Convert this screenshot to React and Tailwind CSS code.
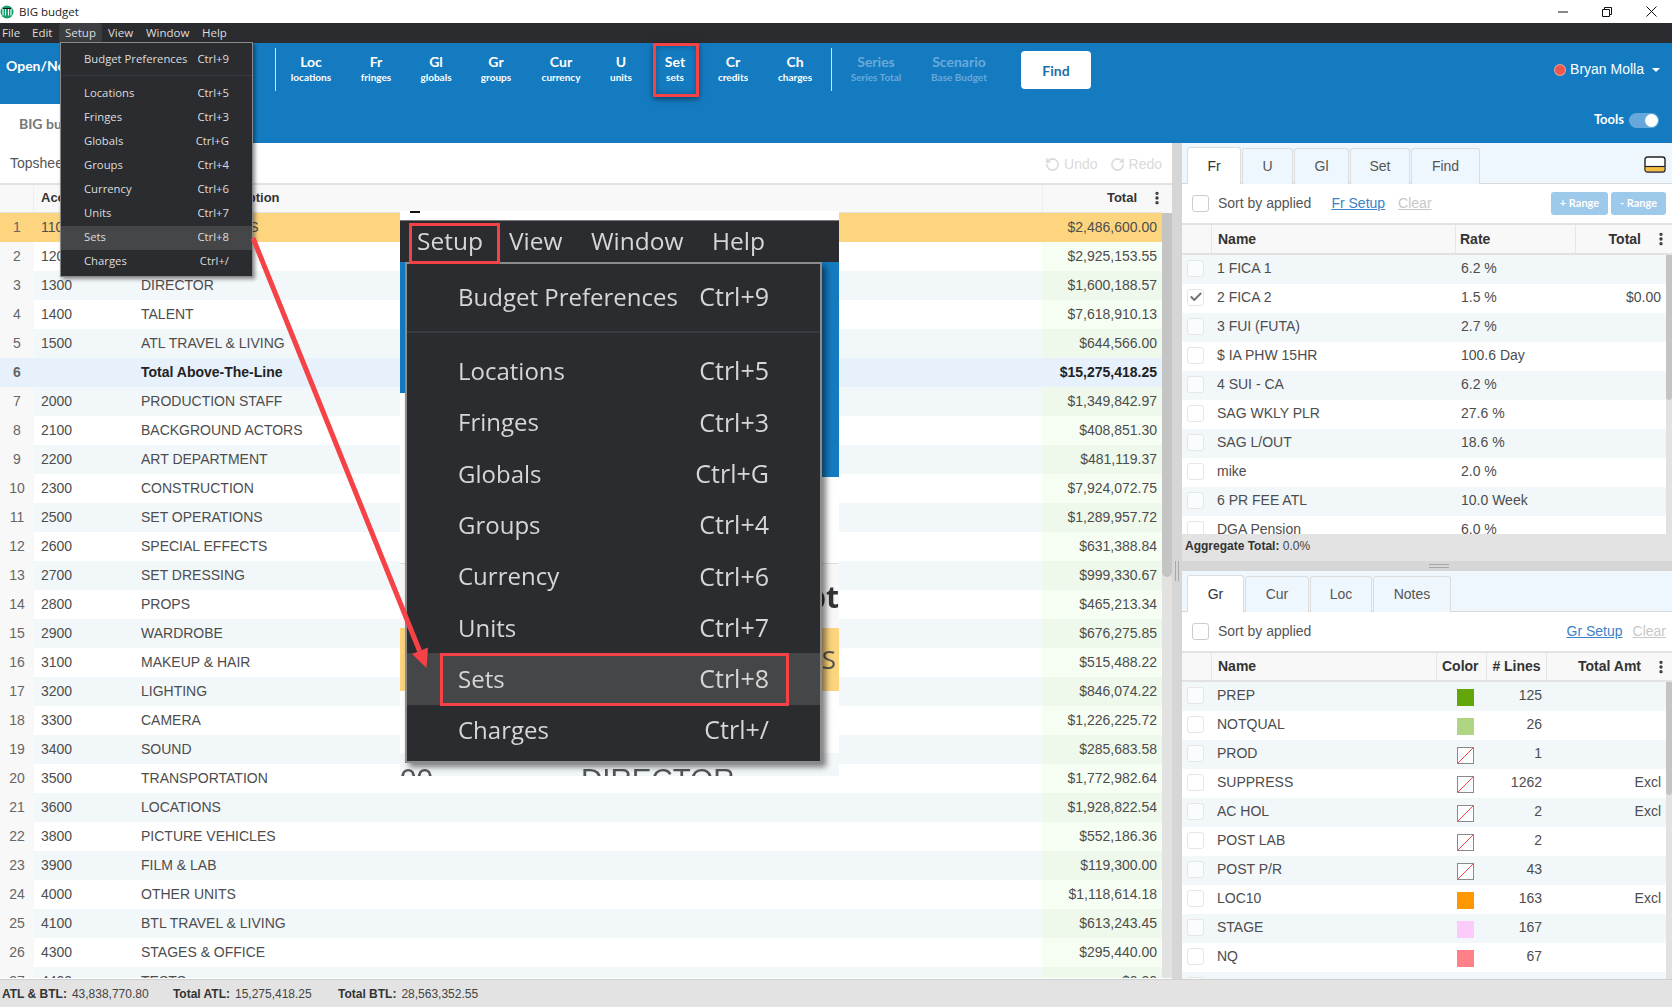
import { Check, EllipsisVertical, RotateCcw, RotateCw } from "lucide-react"

const topRows = [
  ["1", "1100", "STORY & RIGHTS", "$2,486,600.00"],
  ["2", "1200", "PRODUCERS", "$2,925,153.55"],
  ["3", "1300", "DIRECTOR", "$1,600,188.57"],
  ["4", "1400", "TALENT", "$7,618,910.13"],
  ["5", "1500", "ATL TRAVEL & LIVING", "$644,566.00"],
  ["6", "", "Total Above-The-Line", "$15,275,418.25"],
  ["7", "2000", "PRODUCTION STAFF", "$1,349,842.97"],
  ["8", "2100", "BACKGROUND ACTORS", "$408,851.30"],
  ["9", "2200", "ART DEPARTMENT", "$481,119.37"],
  ["10", "2300", "CONSTRUCTION", "$7,924,072.75"],
  ["11", "2500", "SET OPERATIONS", "$1,289,957.72"],
  ["12", "2600", "SPECIAL EFFECTS", "$631,388.84"],
  ["13", "2700", "SET DRESSING", "$999,330.67"],
  ["14", "2800", "PROPS", "$465,213.34"],
  ["15", "2900", "WARDROBE", "$676,275.85"],
  ["16", "3100", "MAKEUP & HAIR", "$515,488.22"],
  ["17", "3200", "LIGHTING", "$846,074.22"],
  ["18", "3300", "CAMERA", "$1,226,225.72"],
  ["19", "3400", "SOUND", "$285,683.58"],
  ["20", "3500", "TRANSPORTATION", "$1,772,982.64"],
  ["21", "3600", "LOCATIONS", "$1,928,822.54"],
  ["22", "3800", "PICTURE VEHICLES", "$552,186.36"],
  ["23", "3900", "FILM & LAB", "$119,300.00"],
  ["24", "4000", "OTHER UNITS", "$1,118,614.18"],
  ["25", "4100", "BTL TRAVEL & LIVING", "$613,243.45"],
  ["26", "4300", "STAGES & OFFICE", "$295,440.00"],
  ["27", "4400", "TESTS", "$0.00"],
]

const fringes = [
  ["1 FICA 1", "6.2 %", ""],
  ["2 FICA 2", "1.5 %", "$0.00"],
  ["3 FUI (FUTA)", "2.7 %", ""],
  ["$ IA PHW 15HR", "100.6 Day", ""],
  ["4 SUI - CA", "6.2 %", ""],
  ["SAG WKLY PLR", "27.6 %", ""],
  ["SAG L/OUT", "18.6 %", ""],
  ["mike", "2.0 %", ""],
  ["6 PR FEE ATL", "10.0 Week", ""],
  ["DGA Pension", "6.0 %", ""],
]

const groups = [
  ["PREP", "bg-[#63a60a]", "125", ""],
  ["NOTQUAL", "bg-[#aed581]", "26", ""],
  ["PROD", "", "1", ""],
  ["SUPPRESS", "", "1262", "Excl"],
  ["AC HOL", "", "2", "Excl"],
  ["POST LAB", "", "2", ""],
  ["POST P/R", "", "43", ""],
  ["LOC10", "bg-[#ff9800]", "163", "Excl"],
  ["STAGE", "bg-[#fccbfc]", "167", ""],
  ["NQ", "bg-[#ff8087]", "67", ""],
  ["", "", "", ""],
]

const tools = [
  ["Loc", "locations", "w-[70px]"],
  ["Fr", "fringes", "w-[60px]"],
  ["Gl", "globals", "w-[60px]"],
  ["Gr", "groups", "w-[60px]"],
  ["Cur", "currency", "w-[70px]"],
  ["U", "units", "w-[50px]"],
  ["Set", "sets", "w-[58px]"],
  ["Cr", "credits", "w-[58px]"],
  ["Ch", "charges", "w-[66px]"],
]

const menuBar = [
  ["File", "w-[27px] pl-[2px]"],
  ["Edit", "w-[32px] pl-[5px]"],
  ["Setup", "w-[43px] pl-[6px] bg-[#3d3e42] rounded-t-sm"],
  ["View", "w-[39px] pl-[6px]"],
  ["Window", "w-[56px] pl-[5px]"],
  ["Help", "w-[40px] pl-[5px]"],
]

const setupItems = [
  ["Locations", "Ctrl+5"],
  ["Fringes", "Ctrl+3"],
  ["Globals", "Ctrl+G"],
  ["Groups", "Ctrl+4"],
  ["Currency", "Ctrl+6"],
  ["Units", "Ctrl+7"],
  ["Sets", "Ctrl+8"],
  ["Charges", "Ctrl+/"],
]

function Logo() {
  return (
    <svg width="14" height="14" viewBox="0 0 14 14">
      <circle cx="7" cy="7" r="6.5" fill="#14a06a" />
      <path d="M3 3.5v7M5.5 3.5v7M8.5 3.5v7M11 3.5v7" stroke="#fff" strokeWidth="1.1" />
      <path d="M3 3.5h8" stroke="#111" strokeWidth="1" />
    </svg>
  )
}

function Kebab() {
  return <EllipsisVertical size={16} strokeWidth={3} className="text-[#333]" />
}

function Checkbox({ checked = false, big = false }) {
  return (
    <span
      className={`flex items-center justify-center rounded-[3px] border bg-white/60 w-[17px] h-[17px] ${
        big ? "border-[#cccccc]" : "border-[#e6e6e6]"
      }`}
    >
      {checked && <Check size={14} strokeWidth={3.5} className="text-[#777]" />}
    </span>
  )
}

function Tabs({ items }) {
  return (
    <div className="flex h-[41px] items-end bg-[#eef7fd] border-b border-[#d8d8d8] pl-[5px] gap-[1px] relative">
      {items.map(([label, width], i) => (
        <div
          key={label}
          className={`${width} h-[36px] -mb-px flex items-center justify-center rounded-t-[3px] border border-b-0 border-[#dcdcdc] text-[14px] ${
            i === 0 ? "bg-white text-[#333] h-[37px]" : "bg-[#eef7fd] text-[#555]"
          }`}
        >
          {label}
        </div>
      ))}
    </div>
  )
}

function Scrollbar({ thumb }) {
  return (
    <div className="w-[6px] bg-[#e2e2e2] shrink-0">
      <div className={`${thumb} bg-[#c4c4c4] rounded-b-[3px]`} />
    </div>
  )
}

function BudgetTable() {
  return (
    <div className="flex-1 flex flex-col min-w-0">
      <div className="h-[40px] flex items-center justify-between pl-[10px] pr-[10px] bg-white text-[14px]">
        <span className="text-[#555] pt-[1px]">Topsheet</span>
        <span className="flex items-center text-[#dadada] text-[14px] gap-[12px] pt-[3px]">
          <span className="flex items-center gap-[4px]"><RotateCcw size={15} strokeWidth={2.5} />Undo</span>
          <span className="flex items-center gap-[4px]"><RotateCw size={15} strokeWidth={2.5} />Redo</span>
        </span>
      </div>
      <div className="h-[30px] flex bg-[#f8f8f8] border-t-2 border-[#e2e2e2] text-[13px] font-bold text-[#333]">
        <div className="w-[34px] border-r border-[#eeeeee]" />
        <div className="w-[107px] pl-[7px] pb-[2px] flex items-center">Account</div>
        <div className="flex-1 pl-[67px] pb-[2px] flex items-center">Description</div>
        <div className="w-[130px] pb-[2px] flex items-center justify-end border-l border-[#eeeeee] pr-[7px] gap-[12px]">
          Total <Kebab />
        </div>
      </div>
      <div className="flex">
        <div className="flex-1 min-w-0 h-[766px] overflow-hidden border-t border-[#e2e2e2] -mt-px">
          {topRows.map(([num, acct, desc, total], i) => {
            const isTotal = num === "6"
            const isFirst = num === "1"
            const stripe = i % 2 === 0
            const rowBg = isFirst ? "bg-[#fdd57e]" : isTotal ? "bg-[#e6f1fc]" : stripe ? "bg-[#f2f7fa]" : "bg-white"
            const totalBg = isFirst || isTotal ? "" : stripe ? "bg-[#eef9ec]" : "bg-[#f6fef4]"
            return (
              <div
                key={num}
                className={`h-[29px] flex items-center text-[14px] ${rowBg} ${isTotal ? "font-bold text-[#222]" : "text-[#4d4d4d]"}`}
              >
                <div className={`w-[34px] h-full pb-[1px] flex items-center justify-center ${isFirst || isTotal ? "" : "bg-[#f8f8f8]"} text-[#666]`}>
                  {num}
                </div>
                <div className="w-[107px] pl-[7px] pb-[1px]">{acct}</div>
                <div className="flex-1 pb-[1px]">{desc}</div>
                <div className={`w-[120px] h-full pb-[1px] flex items-center justify-end pr-[5px] ${totalBg}`}>{total}</div>
              </div>
            )
          })}
        </div>
        <div className="w-[10px] bg-[#e2e2e2] shrink-0">
          <div className="h-[364px] bg-[#c4c4c4] rounded-b-[5px]" />
        </div>
      </div>
    </div>
  )
}

function VerticalSplitter() {
  return (
    <div className="w-[10px] bg-[#d6d6d6] shrink-0 flex flex-col items-center pt-[418px]">
      <div className="h-[20px] w-[4px] border-x border-[#a8a8a8]" />
    </div>
  )
}

function FringesPanel() {
  return (
    <div className="h-[418px] flex flex-col">
      <div className="relative">
        <Tabs items={[["Fr", "w-[54px]"], ["U", "w-[51px]"], ["Gl", "w-[55px]"], ["Set", "w-[60px]"], ["Find", "w-[69px]"]]} />
        <svg width="22" height="17" viewBox="0 0 22 17" className="absolute right-[6px] top-[13px]">
          <rect x="1" y="1" width="20" height="15" rx="2.5" fill="#fff" stroke="#222" strokeWidth="1.4" />
          <rect x="1.8" y="11" width="18.4" height="4.2" fill="#f7bd42" />
          <path d="M1 10.5h20" stroke="#222" strokeWidth="1.2" />
        </svg>
      </div>
      <div className="h-[41px] flex items-center pl-[10px] pr-[6px] text-[14px] text-[#555] border-b-2 border-[#e2e2e2]">
        <Checkbox big />
        <span className="ml-[9px]">Sort by applied</span>
        <span className="ml-[20px] text-[#3b82c8] underline">Fr Setup</span>
        <span className="ml-[13px] text-[#c8c8c8] underline">Clear</span>
        <span className="ml-auto flex gap-[3px] font-['Lato',sans-serif] font-bold text-[11px] text-white">
          <span className="w-[57px] h-[23px] flex items-center justify-center rounded-[3px] bg-[#9dc9ea]">+ Range</span>
          <span className="w-[55px] h-[23px] flex items-center justify-center rounded-[3px] bg-[#9dc9ea]">- Range</span>
        </span>
      </div>
      <div className="h-[30px] flex items-center bg-[#f8f8f8] border-b-2 border-[#e2e2e2] text-[14px] font-bold text-[#333] shrink-0">
        <div className="w-[30px] h-full border-r border-[#e6e6e6]" />
        <div className="w-[244px] h-full flex items-center pl-[6px] border-r border-[#e6e6e6]">Name</div>
        <div className="w-[120px] h-full flex items-center pl-[4px] border-r border-[#e6e6e6]">Rate</div>
        <div className="flex-1 h-full flex items-center justify-end gap-[12px] pr-[3px]">Total <Kebab /></div>
      </div>
      <div className="h-[279px] flex shrink-0">
        <div className="flex-1 overflow-hidden">
          {fringes.map(([name, rate, total], i) => (
            <div key={name} className={`h-[29px] pb-[3px] flex items-center text-[14px] text-[#4d4d4d] shrink-0 ${i % 2 === 0 ? "bg-[#f2f7fa]" : "bg-white"}`}>
              <div className="w-[30px] pl-[5px]"><Checkbox checked={i === 1} /></div>
              <div className="w-[244px] pl-[5px]">{name}</div>
              <div className="w-[120px] pl-[5px]">{rate}</div>
              <div className="flex-1 text-right pr-[5px]">{total}</div>
            </div>
          ))}
        </div>
        <Scrollbar thumb="h-[145px]" />
      </div>
      <div className="h-[27px] pb-[3px] flex items-center pl-[3px] bg-[#e3e3e3] text-[12px] text-[#444]">
        <span className="font-bold text-[#333]">Aggregate Total:</span>&nbsp;0.0%
      </div>
    </div>
  )
}

function Swatch({ color }) {
  if (color) return <div className={`w-[17px] h-[17px] mt-[3px] ${color}`} />
  return (
    <svg width="17" height="17" viewBox="0 0 17 17" className="mt-[3px]">
      <rect x="0.5" y="0.5" width="16" height="16" fill="#fff" stroke="#8a8a8a" />
      <path d="M1 16L16 1" stroke="#f44a4a" strokeWidth="1" />
    </svg>
  )
}

function GroupsPanel() {
  return (
    <div className="flex-1 flex flex-col min-h-0">
      <Tabs items={[["Gr", "w-[57px]"], ["Cur", "w-[64px]"], ["Loc", "w-[62px]"], ["Notes", "w-[78px]"]]} />
      <div className="h-[41px] flex items-center pl-[10px] pr-[6px] text-[14px] text-[#555] border-b-2 border-[#e2e2e2] shrink-0">
        <Checkbox big />
        <span className="ml-[9px]">Sort by applied</span>
        <span className="ml-auto text-[#3b82c8] underline">Gr Setup</span>
        <span className="ml-[10px] text-[#c8c8c8] underline">Clear</span>
      </div>
      <div className="h-[29px] flex items-center bg-[#f8f8f8] border-b-2 border-[#e2e2e2] text-[14px] font-bold text-[#333] shrink-0">
        <div className="w-[30px] h-full border-r border-[#e6e6e6]" />
        <div className="w-[225px] h-full flex items-center pl-[6px] border-r border-[#e6e6e6]">Name</div>
        <div className="w-[50px] h-full flex items-center pl-[5px] border-r border-[#e6e6e6]">Color</div>
        <div className="w-[60px] h-full flex items-center justify-center border-r border-[#e6e6e6]"># Lines</div>
        <div className="flex-1 h-full flex items-center justify-end gap-[12px] pr-[3px]">Total Amt <Kebab /></div>
      </div>
      <div className="h-[297px] flex">
        <div className="flex-1 overflow-hidden">
          {groups.map(([name, color, lines, amt], i) => (
            <div key={i} className={`h-[29px] pb-[2px] flex items-center text-[14px] text-[#4d4d4d] ${i % 2 === 0 ? "bg-[#f2f7fa]" : "bg-white"}`}>
              <div className="w-[30px] pl-[5px]"><Checkbox /></div>
              <div className="w-[225px] pl-[5px]">{name}</div>
              <div className="w-[50px] pl-[20px] flex">{name && <Swatch color={color} />}</div>
              <div className="w-[55px] text-right">{lines}</div>
              <div className="flex-1 text-right pr-[5px]">{amt}</div>
            </div>
          ))}
        </div>
        <Scrollbar thumb="h-[113px]" />
      </div>
    </div>
  )
}

function SetupDropdown() {
  return (
    <div className="absolute left-[60px] top-[42px] w-[193px] h-[235px] bg-[#2b2c30] border border-[#8a8a8a] shadow-[2px_2px_4px_rgba(0,0,0,0.45)] pt-[4px] text-[11.3px] text-[#dddddd] font-['Open_Sans',sans-serif]">
      <div className="h-[24px] flex items-center justify-between px-[23px]">
        <span>Budget Preferences</span>
        <span>Ctrl+9</span>
      </div>
      <div className="mt-[4px] mb-[5.5px] h-px bg-[#3a3b40]" />
      {setupItems.map(([label, keys]) => (
        <div key={label} className={`h-[24px] flex items-center justify-between px-[23px] ${label === "Sets" ? "bg-[#454648]" : ""}`}>
          <span>{label}</span>
          <span>{keys}</span>
        </div>
      ))}
    </div>
  )
}

function ZoomInset() {
  return (
    <div className="absolute left-[400px] top-[211px] w-[439px] h-[565px] bg-white overflow-hidden font-['Open_Sans',sans-serif]">
      <div className="h-[9px] bg-white">
        <div className="ml-[10px] w-[10px] h-[2px] bg-[#111]" />
      </div>
      <div className="h-[42px] bg-[#2b2c30] border-t border-[#777] flex items-center text-[24.5px] text-[#d6d6d6] blur-[0.4px]">
        <span className="ml-[17px] w-[92px]">Setup</span>
        <span className="w-[82px]">View</span>
        <span className="w-[121px]">Window</span>
        <span>Help</span>
      </div>
      <div className="h-[215px] bg-[#147bc1] relative">
        <div className="absolute left-0 top-[131px] w-[6px] h-[84px] bg-white" />
      </div>
      <div className="h-[86px] bg-white" />
      <div className="h-[65px] bg-[#f8f8f8] border-t border-[#dddddd] flex items-center justify-end text-[30px] font-bold text-[#333] blur-[0.5px] overflow-hidden">
        <span>pt</span>
      </div>
      <div className="h-[63px] bg-[#fdd57e] flex items-center justify-end pr-[3px] text-[26px] text-[#555] blur-[0.5px]">
        <span>S</span>
      </div>
      <div className="h-[62px] bg-white" />
      <div className="h-[23px] bg-[#f2f7fa] relative overflow-hidden font-['Liberation_Sans',sans-serif] text-[29.5px] text-[#555] blur-[0.4px]">
        <span className="absolute left-0 top-[4px]">00</span>
        <span className="absolute left-[181px] top-[4px]">DIRECTOR</span>
      </div>

      <div className="absolute left-[5px] top-[51px] w-[417px] h-[501px] bg-[#2b2c30] border-2 border-[#8c8c8c] shadow-[4px_4px_6px_rgba(0,0,0,0.5)] pt-[7px] text-[#d6d6d6]">
        <div className="h-[51px] flex items-center justify-between pl-[51px] pr-[51px] blur-[0.4px]">
          <span className="text-[24px]">Budget Preferences</span>
          <span className="text-[25px]">Ctrl+9</span>
        </div>
        <div className="mt-[9px] mb-[12.5px] h-[2px] bg-[#3a3b40]" />
        {setupItems.map(([label, keys]) => (
          <div key={label} className={`h-[51.3px] flex items-center justify-between pl-[51px] pr-[51px] ${label === "Sets" ? "bg-[#454648]" : ""}`}>
            <span className="text-[24px] blur-[0.4px]">{label}</span>
            <span className="text-[25px] blur-[0.4px]">{keys}</span>
          </div>
        ))}
      </div>

      <div className="absolute left-[9px] top-[12px] w-[91px] h-[41px] border-[3px] border-[#f44247]" />
      <div className="absolute left-[40px] top-[442px] w-[349px] h-[53px] border-[3px] border-[#f44247]" />
    </div>
  )
}

function Arrow() {
  return (
    <svg width="1672" height="1007" viewBox="0 0 1672 1007" className="absolute left-0 top-0 pointer-events-none">
      <path d="M253 238L419.6 651" stroke="#f44247" strokeWidth="5" />
      <path d="M426.5 668L412 654L428 647.5Z" fill="#f44247" />
    </svg>
  )
}

export default function App() {
  return (
    <div className="relative w-[1672px] h-[1007px] overflow-hidden flex flex-col bg-white font-['Liberation_Sans',sans-serif]">
      {/* window title */}
      <div className="h-[23px] flex items-center bg-white shrink-0 font-['Open_Sans',sans-serif] text-[11.5px] text-[#222]">
        <Logo />
        <span className="ml-[5px]">BIG budget</span>
        <div className="ml-auto flex items-center pr-[15px] gap-[34px]">
          <svg width="10" height="10" viewBox="0 0 10 10"><path d="M0 5h10" stroke="#111" /></svg>
          <svg width="10" height="10" viewBox="0 0 10 10" fill="none" stroke="#111"><path d="M.5 2.5h7v7h-7zM2.5 2.5v-2h7v7h-2" /></svg>
          <svg width="11" height="11" viewBox="0 0 11 11" fill="none" stroke="#111"><path d="M.5.5l10 10M10.5.5l-10 10" /></svg>
        </div>
      </div>

      {/* menu bar */}
      <div className="h-[20px] flex items-stretch bg-[#2b2c30] shrink-0 font-['Open_Sans',sans-serif] text-[11.5px] text-[#dddddd]">
        {menuBar.map(([label, cls]) => (
          <div key={label} className={`flex items-center ${cls}`}>{label}</div>
        ))}
      </div>

      {/* blue header */}
      <div className="h-[100px] bg-[#147bc1] shrink-0 flex flex-col font-['Lato',sans-serif] text-white">
        <div className="h-[61px] flex items-start relative">
          <div className="w-[275px] shrink-0 pl-[6px] pt-[12px] text-[14px] font-bold">Open/New</div>
          <div className="mt-[5px] h-[43px] w-px bg-[#d0e4f2]" />
          {tools.map(([title, sub, width]) => (
            <div key={title} className={`${width} pt-[12px] flex flex-col items-center leading-none shrink-0`}>
              <span className="text-[14px] font-bold h-[17px]">{title}</span>
              <span className="text-[10px] font-bold">{sub}</span>
            </div>
          ))}
          <div className="ml-[3px] mt-[5px] h-[43px] w-px bg-[#d0e4f2]" />
          <div className="w-[86px] pt-[12px] flex flex-col items-center leading-none text-[#69a9da] ml-[1px]">
            <span className="text-[14px] font-bold h-[17px]">Series</span>
            <span className="text-[10px] font-bold">Series Total</span>
          </div>
          <div className="w-[80px] pt-[12px] flex flex-col items-center leading-none text-[#69a9da]">
            <span className="text-[14px] font-bold h-[17px]">Scenario</span>
            <span className="text-[10px] font-bold">Base Budget</span>
          </div>
          <div className="ml-[22px] mt-[8px] w-[70px] h-[38px] bg-white rounded-[4px] flex items-center justify-center text-[14px] font-bold text-[#1d6ea8]">Find</div>
          <div className="ml-auto mr-[12px] mt-[16px] flex items-center font-['Liberation_Sans',sans-serif] text-[14px]">
            <span className="w-[12px] h-[12px] rounded-full bg-[#ea5a4e] border border-white/40 mr-[4px]" />
            Bryan Molla
            <span className="ml-[8px] border-x-[4px] border-x-transparent border-t-[4px] border-t-white" />
          </div>
          <div className="absolute left-[653px] top-0 w-[46px] h-[54px] border-[3px] border-[#f44247] shadow-[0_2px_6px_rgba(0,0,0,0.5),inset_0_0_6px_rgba(0,0,0,0.3)]" />
        </div>
        <div className="h-[39px] flex items-center justify-between">
          <div className="h-full w-[200px] bg-white rounded-tr-sm flex items-center pl-[19px] text-[14px] font-bold text-[#777]">BIG budget</div>
          <div className="flex items-center pr-[13px] gap-[5px] mb-[7px]">
            <span className="text-[13px] font-bold">Tools</span>
            <span className="w-[30px] h-[15px] rounded-full bg-[#66a8dc] flex items-center justify-end pr-[1px]">
              <span className="w-[13px] h-[13px] rounded-full bg-white" />
            </span>
          </div>
        </div>
      </div>

      {/* main */}
      <div className="flex-1 flex min-h-0">
        <BudgetTable />
        <VerticalSplitter />
        <div className="w-[490px] shrink-0 flex flex-col">
          <FringesPanel />
          <div className="h-[10px] bg-[#d6d6d6] flex items-center justify-center shrink-0">
            <div className="ml-[24px] w-[20px] h-[4px] border-y border-[#a8a8a8]" />
          </div>
          <GroupsPanel />
        </div>
      </div>

      {/* totals footer */}
      <div className="h-[28px] flex items-center bg-[#e3e3e3] border-t border-[#cfcfcf] shrink-0 text-[12px] text-[#444] pl-[2px]">
        <b className="text-[#333]">ATL &amp; BTL:</b>
        <span className="ml-[5px] w-[101px]">43,838,770.80</span>
        <b className="text-[#333]">Total ATL:</b>
        <span className="ml-[5px] w-[103px]">15,275,418.25</span>
        <b className="text-[#333]">Total BTL:</b>
        <span className="ml-[5px]">28,563,352.55</span>
      </div>

      <ZoomInset />
      <SetupDropdown />
      <Arrow />
    </div>
  )
}
